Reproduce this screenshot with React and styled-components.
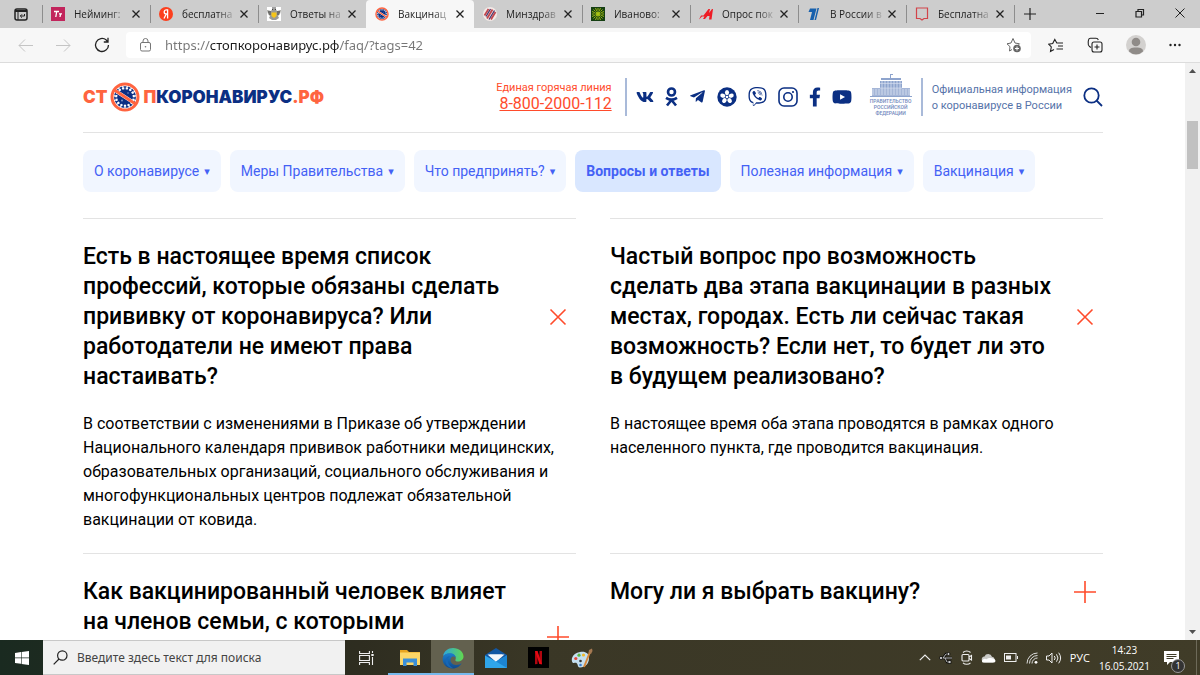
import React, { useState } from "react";
import styled, { createGlobalStyle, css } from "styled-components";
import {
  FaVk,
  FaTelegramPlane,
  FaViber,
  FaFacebookF,
  FaYoutube,
} from "react-icons/fa";

const TABS = [
  { id: "tilda", title: "Нейминг:" },
  { id: "yandex", title: "бесплатна" },
  { id: "gerb", title: "Ответы на" },
  { id: "virus", title: "Вакцинац", active: true },
  { id: "minzdrav", title: "Минздрав" },
  { id: "ivanovo", title: "Иваново:" },
  { id: "aif", title: "Опрос пок" },
  { id: "first", title: "В России в" },
  { id: "book", title: "Бесплатна" },
];

const NAV = [
  { title: "О коронавирусе", menu: true },
  { title: "Меры Правительства", menu: true },
  { title: "Что предпринять?", menu: true },
  { title: "Вопросы и ответы", active: true },
  { title: "Полезная информация", menu: true },
  { title: "Вакцинация", menu: true },
];

const FAQ = [
  {
    id: 1,
    question:
      "Есть в настоящее время список\nпрофессий, которые обязаны сделать\nпрививку от коронавируса? Или\nработодатели не имеют права\nнастаивать?",
    answer:
      "В соответствии с изменениями в Приказе об утверждении\nНационального календаря прививок работники медицинских,\nобразовательных организаций, социального обслуживания и\nмногофункциональных центров подлежат обязательной\nвакцинации от ковида.",
  },
  {
    id: 2,
    question:
      "Частый вопрос про возможность\nсделать два этапа вакцинации в разных\nместах, городах. Есть ли сейчас такая\nвозможность? Если нет, то будет ли это\nв будущем реализовано?",
    answer:
      "В настоящее время оба этапа проводятся в рамках одного\nнаселенного пункта, где проводится вакцинация.",
  },
  {
    id: 3,
    question: "Как вакцинированный человек влияет\nна членов семьи, с которыми",
    lines: 4,
  },
  { id: 4, question: "Могу ли я выбрать вакцину?" },
];

const VirusMark = ({ size }) => (
  <svg width={size} height={size} viewBox="0 0 30 30" aria-hidden="true">
    <g stroke="#0b2f83" strokeWidth="1.3" strokeLinecap="round">
      {[0, 24, 48, 72, 96, 120, 144, 168, 192, 216, 240, 264, 288, 312, 336].map(
        (a) => (
          <path key={a} d="M15 10V4.8M14 4.8h2" transform={`rotate(${a} 15 15)`} />
        )
      )}
    </g>
    <circle cx="15" cy="15" r="7.8" fill="#0b2f83" />
    <circle cx="12" cy="18.5" r="1" fill="#7f96c8" />
    <circle cx="18" cy="11" r="0.8" fill="#7f96c8" />
    <path d="M6.5 9.500l17 11" stroke="#fff" strokeWidth="3.600" />
    <circle cx="15" cy="15" r="13" fill="none" stroke="#ff6440" strokeWidth="3" />
    <path d="M4.5 8l21 14" stroke="#ff6440" strokeWidth="3" />
  </svg>
);

const Favicon = ({ id }) => {
  if (id === "virus") return <VirusMark size={14} />;
  return (
    <svg width="14" height="14" viewBox="0 0 14 14" aria-hidden="true">
      {id === "tilda" && (
        <>
          <rect width="14" height="14" fill="#c2255c" />
          <path d="M3 4.5h5M5.7 4.5L4.8 10M8 6.8h3M9.6 6.8L9 10" stroke="#fff" strokeWidth="1.3" />
        </>
      )}
      {id === "yandex" && (
        <>
          <circle cx="7" cy="7" r="7" fill="#fc3f1d" />
          <path d="M8.6 11.5V2.9H7.4C6 2.9 5.2 3.7 5.2 5s.7 2 2 2h1.4M7.2 7L5 11.5" fill="none" stroke="#fff" strokeWidth="1.3" />
        </>
      )}
      {id === "gerb" && (
        <>
          <rect width="14" height="14" fill="#fff" />
          <path d="M0 3l4 1 1.500-2h3L10 4l4-1-1 4-2 2 1 2-3 2H5l-3-2 1-2-2-2z" fill="#9a9a95" />
          <path d="M1 5h3M10 5h3M5 1h4M5 2.500h1M8 2.500h1M2 7h2M10 7h2" stroke="#444" />
          <path d="M4.500 5.500h5V9L7 11 4.500 9z" fill="#f5c518" />
        </>
      )}
      {id === "minzdrav" && (
        <>
          <circle cx="7" cy="7" r="7" fill="#f3e9e6" />
          <path d="M1.500 8.500L5.500 2M4 11.500L9.500 2.500M8 12.500l4.500-7.500" stroke="#c2474e" strokeWidth="1.800" />
          <path d="M3 9.500L7.500 2M6 12.500L11.500 3.500" stroke="#49386f" strokeWidth="1.300" />
        </>
      )}
      {id === "ivanovo" && (
        <>
          <rect width="14" height="14" fill="#153f12" />
          <path d="M7 1v12M1 7h12M2.500 2.500l9 9M11.500 2.500l-9 9M4.500 1l5 12M9.500 1l-5 12M1 4.500l12 5M1 9.500l12-5" stroke="#a9c414" strokeWidth="0.900" />
          <circle cx="7" cy="7" r="3.200" fill="none" stroke="#153f12" strokeWidth="0.700" />
        </>
      )}
      {id === "aif" && (
        <path d="M0 12.500l2-4h2.500L9.500 2h1.500L10 6l3-4h1l-1.500 10.500H10l.5-3.500H8.500L6 12H4l1.500-2.500H3z" fill="#ee1c25" />
      )}
      {id === "first" && (
        <path d="M3 1.500h6.500L6.500 13H3L5 5H1.500zM10.500 1H12L9 13H7.500z" fill="#1660ad" />
      )}
      {id === "book" && (
        <path d="M1.500 1h11v10.500H9L7 13l-2-1.500H1.500z" fill="none" stroke="#d2444a" strokeWidth="1.200" />
      )}
    </svg>
  );
};

const CloseIcon = () => (
  <svg width="8" height="8" viewBox="0 0 8 8" aria-hidden="true">
    <path d="M0.500 0.500l7 7M7.500 0.500l-7 7" stroke="#222" strokeWidth="1.300" />
  </svg>
);

const BrowserTabs = () => (
  <TabStrip>
    <TabActions aria-label="Меню вкладок">
      <svg width="14" height="13" viewBox="0 0 14 13" fill="none" stroke="#222">
        <rect x="1" y="1" width="12" height="11" rx="2" strokeWidth="1.500" />
        <path d="M1 3h12" strokeWidth="2" />
        <path d="M4 4v8" />
        <path d="M10.500 6v2H6.500M8 6.300L6.300 8 8 9.700" />
      </svg>
    </TabActions>
    {TABS.map((tab) => (
      <Tab key={tab.id} $active={tab.active}>
        <Favicon id={tab.id} />
        <TabTitle>{tab.title}</TabTitle>
        <TabClose aria-label="Закрыть вкладку">
          <CloseIcon />
        </TabClose>
      </Tab>
    ))}
    <NewTab aria-label="Новая вкладка">
      <svg width="12" height="12" viewBox="0 0 12 12" stroke="#222" strokeWidth="1.200">
        <path d="M6 0v12M0 6h12" />
      </svg>
    </NewTab>
    <WindowButtons>
      <WindowButton aria-label="Свернуть">
        <svg width="10" height="10" viewBox="0 0 10 10" stroke="#222">
          <path d="M1 5.500h8" />
        </svg>
      </WindowButton>
      <WindowButton aria-label="Развернуть">
        <svg width="10" height="10" viewBox="0 0 10 10" stroke="#222" fill="none">
          <path d="M1 3.500h5.500v5.500H1zM3 3V1.500h5.500V7H7" strokeWidth="1.200" />
        </svg>
      </WindowButton>
      <WindowButton aria-label="Закрыть">
        <svg width="10" height="10" viewBox="0 0 10 10" stroke="#222">
          <path d="M0.500 0.500l9 9M9.500 0.500l-9 9" />
        </svg>
      </WindowButton>
    </WindowButtons>
  </TabStrip>
);

const BrowserToolbar = () => {
  const [url, setUrl] = useState("https://стопкоронавирус.рф/faq/?tags=42");

  return (
    <Toolbar>
      <NavButtons>
        <ToolButton aria-label="Назад" disabled>
          <svg width="15" height="13" viewBox="0 0 15 13" fill="none" stroke="#c4c4c4">
            <path d="M7 .5L1 6.500l6 6M1 6.500h14" />
          </svg>
        </ToolButton>
        <ToolButton aria-label="Вперёд" disabled>
          <svg width="15" height="13" viewBox="0 0 15 13" fill="none" stroke="#c4c4c4">
            <path d="M8 .5l6 6-6 6M14 6.500H0" />
          </svg>
        </ToolButton>
        <ToolButton aria-label="Обновить">
          <svg width="16" height="16" viewBox="0 0 16 16" fill="none" stroke="#222" strokeWidth="1.300">
            <path d="M14.500 8A6.500 6.500 0 1 1 12.300 3.100L14 5M14 .8V5H9.800" />
          </svg>
        </ToolButton>
      </NavButtons>
      <AddressBar>
        <svg width="11" height="14" viewBox="0 0 11 14" fill="none" stroke="#767676">
          <rect x="0.500" y="4.500" width="10" height="8.500" rx="1.500" />
          <path d="M3 4.500V3a2.500 2.500 0 0 1 5 0v1.500" />
          <circle cx="5.500" cy="8.800" r="0.800" fill="#767676" stroke="none" />
        </svg>
        <AddressInput
          aria-label="Адресная строка"
          value={url}
          spellCheck={false}
          onChange={(e) => setUrl(e.target.value)}
        />
        <ToolButton aria-label="Добавить в избранное">
          <svg width="17" height="16" viewBox="0 0 17 16" fill="none" stroke="#666">
            <path d="M6 12.500l-2.500 1.500.5-4.300L1 6.800l4-.8L7 1.500 9 6l4.500.8-1 1" />
            <circle cx="11" cy="11.500" r="3.800" fill="#666" stroke="none" />
            <path d="M11 9.500v4M9 11.500h4" stroke="#fff" />
          </svg>
        </ToolButton>
      </AddressBar>
      <ToolActions>
        <ToolButton aria-label="Избранное">
          <svg width="16" height="15" viewBox="0 0 16 15" fill="none" stroke="#222" strokeWidth="1.100">
            <path d="M6 11.500l-3.500 2L3.300 9 .7 6.200l4-.6L6.800 1.500l2 3.500H15M10 8h5M8.500 11H15" />
          </svg>
        </ToolButton>
        <ToolButton aria-label="Коллекции">
          <svg width="16" height="16" viewBox="0 0 16 16" fill="none" stroke="#222" strokeWidth="1.100">
            <rect x="5" y="5" width="10" height="10" rx="2" />
            <path d="M10 7.500v5M7.500 10h5M4 10.500L2.500 9.500C1 8.500 1 7 1.200 5L1.500 3c.2-1 1-1.700 2-1.700h5.500c1 0 2 .7 2.300 1.700" />
          </svg>
        </ToolButton>
        <ToolButton aria-label="Профиль">
          <svg width="20" height="20" viewBox="0 0 20 20">
            <circle cx="10" cy="10" r="10" fill="#d3d1cf" />
            <circle cx="10" cy="7" r="4.300" fill="#8f8b88" />
            <path d="M3 16.500c0-3 2-4 7-4s7 1 7 4a10 10 0 0 1-14 0z" fill="#8f8b88" />
          </svg>
        </ToolButton>
        <ToolButton aria-label="Настройки">
          <svg width="12" height="4" viewBox="0 0 12 4" fill="#222">
            <circle cx="1.500" cy="2" r="1.200" />
            <circle cx="6" cy="2" r="1.200" />
            <circle cx="10.500" cy="2" r="1.200" />
          </svg>
        </ToolButton>
      </ToolActions>
    </Toolbar>
  );
};

const SiteHeader = () => (
  <Header>
    <Logo href="#" aria-label="Стопкоронавирус.рф">
      <LogoAccent>СТ</LogoAccent>
      <VirusMark size={30} />
      <span>
        <LogoAccent>П</LogoAccent>КОРОНАВИРУС<LogoAccent>.РФ</LogoAccent>
      </span>
    </Logo>
    <Hotline>
      <span>Единая горячая линия</span>
      <Phone href="tel:88002000112">8-800-2000-112</Phone>
    </Hotline>
    <Socials>
      <a href="#vk" aria-label="ВКонтакте"><FaVk size={18} /></a>
      <a href="#ok" aria-label="Одноклассники">
        <svg width="13" height="20" viewBox="0 0 13 20" fill="none" stroke="currentColor" strokeWidth="2.600">
          <circle cx="6.500" cy="5" r="3.500" />
          <path d="M1 10.800c3.500 2.300 7.500 2.300 11 0M6.500 13L2 18.500M6.500 13l4.500 5.500" />
        </svg>
      </a>
      <a href="#tg" aria-label="Telegram"><FaTelegramPlane size={17} /></a>
      <a href="#icq" aria-label="ICQ">
        <svg width="20" height="20" viewBox="0 0 20 20">
          <circle cx="10" cy="10" r="9.700" fill="currentColor" />
          {[0, 72, 144, 216, 288].map((a) => (
            <ellipse key={a} cx="10" cy="5.600" rx="2.100" ry="2.600" fill="#fff" transform={`rotate(${a} 10 10)`} />
          ))}
          <circle cx="10" cy="10" r="1.300" fill="#fff" />
        </svg>
      </a>
      <a href="#viber" aria-label="Viber"><FaViber size={19} /></a>
      <a href="#ig" aria-label="Instagram">
        <svg width="20" height="20" viewBox="0 0 20 20" fill="none" stroke="currentColor" strokeWidth="1.600">
          <rect x="1" y="1" width="18" height="18" rx="5" />
          <circle cx="10" cy="10" r="4.200" />
          <circle cx="15" cy="5" r="1.100" fill="currentColor" stroke="none" />
        </svg>
      </a>
      <a href="#fb" aria-label="Facebook"><FacebookIcon /></a>
      <a href="#yt" aria-label="YouTube"><FaYoutube size={20} /></a>
    </Socials>
    <Government>
      <svg width="44" height="24" viewBox="0 0 44 24" fill="#8ea4cd">
        <path d="M21 0h3v1h-2v4h-1zM12 4h20v2H12zM11 7h22v7H11z" />
        <path d="M3 14h38v8H3z" opacity="0.800" />
        <path d="M1 22h42v1H1z" />
        <path d="M4 15v6M7 15v6M10 15v6M13 7v14M16 7v14M19 7v14M22 7v14M25 7v14M28 7v14M31 7v14M34 15v6M37 15v6M40 15v6" stroke="#dbe3f2" strokeWidth="0.800" />
        <path d="M11 9.500h22M11 14h22" stroke="#dbe3f2" strokeWidth="0.600" />
      </svg>
      <span>ПРАВИТЕЛЬСТВО</span>
      <span>РОССИЙСКОЙ</span>
      <span>ФЕДЕРАЦИИ</span>
    </Government>
    <Official>
      Официальная информация
      <br />о коронавирусе в России
    </Official>
    <SearchButton aria-label="Поиск">
      <svg width="20" height="20" viewBox="0 0 20 20" fill="none" stroke="#0b2f83" strokeWidth="1.800">
        <circle cx="8.500" cy="8.500" r="7.200" />
        <path d="M13.500 13.500l5.500 5.500" />
      </svg>
    </SearchButton>
  </Header>
);

const FaqItem = ({ item }) => {
  const [open, setOpen] = useState(!!item.answer);

  return (
    <Item>
      <QuestionRow>
        <Question $lines={item.lines}>{item.question}</Question>
        <Toggle
          aria-label={open ? "Свернуть ответ" : "Показать ответ"}
          aria-expanded={open}
          onClick={() => setOpen(!open)}
        >
          <svg width="22" height="22" viewBox="0 0 22 22" fill="none" stroke="#ff4b2b" strokeWidth="1.600">
            {open ? (
              <path d="M3.500 3.500l15 15M18.500 3.500l-15 15" />
            ) : (
              <path d="M11 0v22M0 11h22" />
            )}
          </svg>
        </Toggle>
      </QuestionRow>
      {open && item.answer && <Answer>{item.answer}</Answer>}
    </Item>
  );
};

const TaskbarPanel = () => (
  <Taskbar>
    <TaskButton aria-label="Пуск">
      <svg width="14" height="14" viewBox="0 0 14 14" fill="#fff">
        <path d="M0 2l6-.9v5.500H0zM6.600 1L14 0v6.600H6.600zM0 7.200h6v5.500l-6-.8zM6.600 7.200H14V14l-7.400-1.100z" />
      </svg>
    </TaskButton>
    <TaskSearch>
      <svg width="15" height="15" viewBox="0 0 15 15" fill="none" stroke="#222" strokeWidth="1.200">
        <circle cx="9.300" cy="5.500" r="4.700" />
        <path d="M6 9L.7 14.300" />
      </svg>
      <input aria-label="Поиск Windows" placeholder="Введите здесь текст для поиска" />
    </TaskSearch>
    <TaskButton aria-label="Представление задач">
      <svg width="15" height="14" viewBox="0 0 15 14" fill="none" stroke="#eee" strokeWidth="1.100">
        <path d="M.6 0v2.500h9.800V0M.6 14v-2.500h9.800V14M.6 4.500h9.800v5H.6zM13.500 0v2M13.500 6v8" />
        <path d="M12.300 4h2.400" strokeWidth="2" />
      </svg>
    </TaskButton>
    <TaskButton aria-label="Проводник" $running>
      <svg width="20" height="18" viewBox="0 0 20 18">
        <path d="M0 1h7l2 2h11v13H0z" fill="#e8a520" />
        <path d="M0 3.500h20V16H0z" fill="#fcd667" />
        <path d="M3 9.500h14V17h-3.500v-3.500h-7V17H3z" fill="#3b8fd8" />
      </svg>
    </TaskButton>
    <TaskButton aria-label="Microsoft Edge" $running $current>
      <svg width="22" height="22" viewBox="0 0 22 22">
        <defs>
          <linearGradient id="edgeTop" x1="0" x2="1">
            <stop offset="0" stopColor="#2aa5e0" />
            <stop offset="1" stopColor="#62d84e" />
          </linearGradient>
          <linearGradient id="edgeLow" x1="0" y1="0" x2="0" y2="1">
            <stop offset="0" stopColor="#1a7fd0" />
            <stop offset="1" stopColor="#114a8b" />
          </linearGradient>
        </defs>
        <path d="M1 9C2 4 6 1 11 1c6 0 10.500 4 10.500 8.500 0 3.500-3 5-5.500 5-2 0-3-.8-2.600-1.600C15 10 12 6.500 8 6.500 4.500 6.500 2 8 1 9z" fill="url(#edgeTop)" />
        <path d="M.6 11.500C1 8 4.500 6.300 8 6.300c3.300 0 5.600 2 5.700 4.500-1-1.300-2.700-1.500-3.700-.8C7 12 8.500 18 14 18c2.500 0 4.500-1 5.800-2-1.500 3-5 5.500-9 5.500C5 21.500.3 17.500.6 11.500z" fill="url(#edgeLow)" />
        <path d="M8 9c-4 3-2 10.500 4 12.300C7 21.500 3.500 18 3.500 14 3.500 11 5.500 9.300 8 9z" fill="#1667b7" />
      </svg>
    </TaskButton>
    <TaskButton aria-label="Почта">
      <svg width="22" height="20" viewBox="0 0 22 20">
        <path d="M0 7l11-7 11 7v12H0z" fill="#1257a3" />
        <path d="M2.500 6.500h17L11 14z" fill="#f5f7fb" />
        <path d="M0 7.500l11 6 11-6V20H0z" fill="#2fa5ea" />
        <path d="M4.500 6.500h13L11 13.500z" fill="#f5f7fb" />
        <path d="M22 7.500V20L11 13.500z" fill="#1c84d2" />
      </svg>
    </TaskButton>
    <TaskButton aria-label="Netflix">
      <svg width="21" height="21" viewBox="0 0 21 21">
        <rect width="21" height="21" fill="#000" />
        <path d="M7 4h2.500v13L7 17.300zM11.500 4H14v13.300l-2.500-.3z" fill="#b1060f" />
        <path d="M7 4h2.500L14 17.300l-2.600-.3z" fill="#e50914" />
      </svg>
    </TaskButton>
    <TaskButton aria-label="Paint">
      <svg width="22" height="20" viewBox="0 0 22 20">
        <path d="M9 4c5-1 9 1 9 6 0 6-4 9.500-9 9.500-2 0-2-1.500-2.500-3S5 14.500 3 15 .5 12 1 10c1-3.500 4-5.300 8-6z" fill="#c5dff0" />
        <circle cx="4.800" cy="10.500" r="1.600" fill="#e0483a" />
        <circle cx="8" cy="7.200" r="1.600" fill="#57b947" />
        <circle cx="12.500" cy="7" r="1.600" fill="#f1b92c" />
        <circle cx="9.500" cy="13" r="1.300" fill="#333" />
        <circle cx="9.500" cy="17" r="1.300" fill="#3c7fd0" />
        <path d="M19 4L13 19" stroke="#d88739" strokeWidth="2" />
        <path d="M17.500 5l.5-3L21 .5 21.500 3 20 6z" fill="#a57952" />
      </svg>
    </TaskButton>
    <Tray>
      <svg width="12" height="7" viewBox="0 0 12 7" fill="none" stroke="#eee" strokeWidth="1.200">
        <path d="M.8 6.200L6 1l5.200 5.200" />
      </svg>
      <svg width="14" height="14" viewBox="0 0 14 14" fill="none" stroke="#0c0c0a" strokeWidth="2.400">
        <path d="M1 7h12M4 7l3-4h2M6 7l2 4h2" />
        <path d="M1 7h12M4 7l3-4h2M6 7l2 4h2" stroke="#ccc" strokeWidth="0.900" />
        <circle cx="2" cy="7" r="1.600" fill="#ccc" strokeWidth="0.800" />
        <circle cx="9.500" cy="3" r="1.500" fill="#ccc" strokeWidth="0.800" />
        <path d="M9 9.500h3v3H9z" fill="#ccc" strokeWidth="0.800" />
      </svg>
      <svg width="12" height="15" viewBox="0 0 12 15" fill="none" stroke="#eee" strokeWidth="1.100">
        <rect x="1" y="4.500" width="7" height="6.500" rx="1" />
        <path d="M8 7l2.500-1.500V10L8 8.500M2 2.500c2-2 5.500-2 7.500 0M2 12.800c2 2 5.500 2 7.500 0" />
      </svg>
      <svg width="15" height="10" viewBox="0 0 15 10">
        <path d="M4 9.500a3 3 0 0 1-.5-6A4 4 0 0 1 11 3.800a3 3 0 0 1 1 5.700z" fill="#c9c9c6" />
        <path d="M1 8.500C1 6 4 5 5.500 6.200c2-2.200 8.500-1.500 9 1.500 0 1-.8 1.800-2 1.800h-10C1.500 9.500 1 9 1 8.500z" fill="#fff" />
      </svg>
      <svg width="14" height="9" viewBox="0 0 14 9" fill="none" stroke="#eee">
        <rect x="0.500" y="0.500" width="11.500" height="8" />
        <path d="M13.500 3v3" />
        <path d="M2 2.500h5v4H2z" fill="#eee" stroke="none" />
      </svg>
      <svg width="12" height="12" viewBox="0 0 12 12" fill="none" stroke="#ddd">
        <path d="M1 11.500A10.500 10.500 0 0 1 11.500 1M3.500 11.500a8 8 0 0 1 8-8M6 11.500A5.500 5.500 0 0 1 11.500 6" />
        <circle cx="10" cy="10.300" r="1.400" fill="#fff" stroke="none" />
      </svg>
      <svg width="16" height="12" viewBox="0 0 16 12" fill="none" stroke="#eee">
        <path d="M.5 4h2.500l3-3v10L3 8H.5zM8.300 4a3 3 0 0 1 0 4M10.500 2.300a6 6 0 0 1 0 7.400M12.700.7a9 9 0 0 1 0 10.600" />
      </svg>
      <Language>РУС</Language>
      <Clock>
        <span>14:23</span>
        <span>16.05.2021</span>
      </Clock>
      <Notifications aria-label="Уведомления">
        <svg width="15" height="14" viewBox="0 0 15 14">
          <path d="M0 0h15v11H6l-3 3v-3H0z" fill="#fff" />
          <path d="M2.500 3.500h10M2.500 5.500h10M2.500 7.500h7" stroke="#403c28" />
        </svg>
        <Badge>1</Badge>
      </Notifications>
    </Tray>
  </Taskbar>
);

const App = () => (
  <Screen>
    <GlobalStyle />
    <BrowserTabs />
    <BrowserToolbar />
    <Viewport>
      <Page>
        <SiteHeader />
        <Nav>
          {NAV.map((item) => (
            <NavLink key={item.title} href="#" $active={item.active}>
              {item.title}
              {item.menu && <Caret>▾</Caret>}
            </NavLink>
          ))}
        </Nav>
        <FaqGrid>
          {FAQ.map((item) => (
            <FaqItem key={item.id} item={item} />
          ))}
        </FaqGrid>
      </Page>
      <Scrollbar>
        <svg width="7" height="4" viewBox="0 0 7 4">
          <path d="M3.500 0L7 4H0z" fill="#505050" />
        </svg>
        <Thumb />
        <svg width="7" height="4" viewBox="0 0 7 4">
          <path d="M0 0h7L3.500 4z" fill="#505050" />
        </svg>
      </Scrollbar>
    </Viewport>
    <TaskbarPanel />
  </Screen>
);

export default App;

const GlobalStyle = createGlobalStyle`
  * {
    box-sizing: border-box;
  }

  body {
    margin: 0;
    background: #fff;
  }

  button {
    padding: 0;
    border: 0;
    background: none;
    font: inherit;
    color: inherit;
  }

  svg {
    display: block;
    flex-shrink: 0;
  }
`;

const Screen = styled.div`
  display: flex;
  flex-direction: column;
  height: 100vh;
  overflow: hidden;
  font-family: "Open Sans", "Noto Sans", sans-serif;
`;

const TabStrip = styled.div`
  display: flex;
  align-items: stretch;
  flex-shrink: 0;
  height: 28px;
  background: #cdcdcd;
`;

const TabActions = styled.button`
  display: flex;
  align-items: center;
  justify-content: center;
  width: 42px;
`;

const Tab = styled.div`
  display: flex;
  align-items: center;
  width: 108px;
  padding: 0 10px 0 9px;
  background: linear-gradient(#8d8d8d, #8d8d8d) left center / 1px 18px no-repeat;

  ${({ $active }) =>
    $active &&
    css`
      background: #f7f7f7;
      border-radius: 4px 4px 0 0;

      & + div {
        background: none;
      }
    `}
`;

const TabTitle = styled.span`
  flex: 1;
  min-width: 0;
  margin-left: 9px;
  white-space: nowrap;
  font-size: 10px;
  line-height: 16px;
  color: #222;
  mask-image: linear-gradient(to right, #000 65%, rgba(0, 0, 0, 0.2) 95%);
`;

const TabClose = styled.button`
  display: flex;
  margin-left: 4px;
`;

const NewTab = styled.button`
  display: flex;
  align-items: center;
  padding: 0 10px;
  background: linear-gradient(#8d8d8d, #8d8d8d) left center / 1px 18px no-repeat;
`;

const WindowButtons = styled.div`
  display: flex;
  margin-left: auto;
`;

const WindowButton = styled.button`
  display: flex;
  align-items: center;
  justify-content: center;
  width: 40px;
  padding-bottom: 2px;
`;

const Toolbar = styled.div`
  display: flex;
  align-items: center;
  flex-shrink: 0;
  height: 35px;
  background: #f7f7f7;
  border-bottom: 1px solid #dcdcdc;
`;

const NavButtons = styled.div`
  display: flex;
  gap: 23px;
  padding: 0 16px 0 18px;
`;

const ToolButton = styled.button`
  display: flex;
  align-items: center;
  justify-content: center;
`;

const AddressBar = styled.div`
  display: flex;
  align-items: center;
  flex: 1;
  height: 26px;
  padding: 0 8px 0 14px;
  background: #fff;
  border-radius: 4px;
`;

const AddressInput = styled.input`
  flex: 1;
  margin-left: 14px;
  padding: 0;
  border: 0;
  outline: 0;
  font-family: "Noto Sans", sans-serif;
  font-size: 13px;
  line-height: 20px;
  color: transparent;
  caret-color: #222;
  background: linear-gradient(to right, #767676 45px, #1b1b1b 45px, #1b1b1b 175px, #767676 175px);
  background-clip: text;
`;

const ToolActions = styled.div`
  display: flex;
  align-items: center;
  gap: 23px;
  padding: 0 19px 0 17px;
`;

const Viewport = styled.div`
  display: flex;
  flex: 1;
  min-height: 0;
`;

const Page = styled.main`
  flex: 1;
  min-width: 0;
  overflow: hidden;
  padding: 0 82px 0 83px;
  font-family: Roboto, sans-serif;
  color: #000;
`;

const Header = styled.header`
  display: flex;
  align-items: center;
  height: 70px;
  padding-bottom: 2px;
  border-bottom: 1px solid #e3e3e3;
`;

const Logo = styled.a`
  display: flex;
  align-items: center;
  gap: 3px;
  margin-right: auto;
  font-family: Inter, sans-serif;
  font-size: 17px;
  font-weight: 900;
  line-height: 20px;
  color: #0b2f83;
  text-decoration: none;
  white-space: nowrap;
`;

const LogoAccent = styled.span`
  color: #ff6440;
`;

const Hotline = styled.div`
  display: flex;
  flex-direction: column;
  align-items: flex-end;
  height: 38px;
  padding: 2px 13px 0 0;
  border-right: 2px solid #a9bad9;
  font-size: 11px;
  line-height: 16px;
  color: #ff4b2b;
  white-space: nowrap;
`;

const Phone = styled.a`
  font-size: 16px;
  line-height: 16px;
  color: inherit;
`;

const Socials = styled.div`
  display: flex;
  align-items: center;
  gap: 11px;
  margin: 0 17px 0 9px;

  a {
    color: #0b2f83;
  }
`;

const FacebookIcon = styled(FaFacebookF)`
  width: 12px;
  height: 20px;
`;

const Government = styled.div`
  display: flex;
  flex-direction: column;
  align-items: center;
  margin-right: 8px;
  padding-bottom: 4px;
  font-size: 5px;
  font-weight: 500;
  line-height: 6px;
  color: #7189bd;
`;

const Official = styled.div`
  padding: 4px 0 2px 9px;
  border-left: 2px solid #a9bad9;
  font-size: 11px;
  line-height: 16px;
  color: #5673a9;
  white-space: nowrap;
`;

const SearchButton = styled.button`
  margin-left: 11px;
`;

const Nav = styled.nav`
  display: flex;
  gap: 9px;
  padding: 17px 0 26px;
`;

const NavLink = styled.a`
  display: flex;
  align-items: center;
  height: 42px;
  padding: 0 11px;
  border-radius: 8px;
  background: ${({ $active }) => ($active ? "#d9e7ff" : "#f1f6ff")};
  font-size: 14px;
  font-weight: ${({ $active }) => ($active ? 700 : 400)};
  line-height: 20px;
  color: #4461f5;
  text-decoration: none;
  white-space: nowrap;
`;

const Caret = styled.span`
  margin-left: 5px;
  padding-top: 2px;
  font-family: "DejaVu Sans", sans-serif;
  font-size: 11px;
`;

const FaqGrid = styled.div`
  display: grid;
  grid-template-columns: 1fr 1fr;
  column-gap: 34px;
`;

const Item = styled.section`
  padding: 23px 0 21px;
  border-top: 1px solid #e3e3e3;
`;

const QuestionRow = styled.div`
  display: flex;
  align-items: center;
  justify-content: space-between;
`;

const Question = styled.h2`
  margin: 0;
  min-height: ${({ $lines = 1 }) => $lines * 30}px;
  font-size: 23px;
  font-weight: 500;
  line-height: 30px;
  white-space: pre-line;
`;

const Toggle = styled.button`
  padding: 0 7px;
`;

const Answer = styled.p`
  margin: 20px 0 0;
  font-size: 16px;
  line-height: 24px;
  white-space: pre-line;
`;

const Scrollbar = styled.div`
  display: flex;
  flex-direction: column;
  align-items: center;
  width: 15px;
  padding: 6px 0;
  background: #f1f1f1;
`;

const Thumb = styled.div`
  width: 11px;
  height: 48px;
  margin: 48px 0 auto;
  background: #c1c1c1;
`;

const Taskbar = styled.div`
  display: flex;
  flex-shrink: 0;
  height: 35px;
  background: linear-gradient(to right, #1a2a20, #2e2d20 30%, #3a3726 45%, #403c28);
  color: #fff;
`;

const TaskButton = styled.button`
  display: flex;
  align-items: center;
  justify-content: center;
  width: 43px;
  background: ${({ $current }) => ($current ? "#63614f" : "none")};
  box-shadow: ${({ $running }) => ($running ? "inset 0 -2px #76b9ed" : "none")};
`;

const TaskSearch = styled.label`
  display: flex;
  align-items: center;
  width: 302px;
  padding: 0 10px;
  background: #f1f1f1;
  border: 1px solid #c8c8c8;
  border-width: 1px 0;

  input {
    flex: 1;
    min-width: 0;
    margin-left: 9px;
    padding: 0;
    border: 0;
    outline: 0;
    background: none;
    font-family: "Noto Sans", sans-serif;
    font-size: 12px;
    line-height: 16px;
  }

  input::placeholder {
    color: #444;
  }
`;

const Tray = styled.div`
  display: flex;
  align-items: center;
  gap: 8px;
  margin-left: auto;
  margin-right: 3px;
  padding-right: 11px;
  border-right: 1px solid #6d6a59;
`;

const Language = styled.span`
  font-size: 11px;
`;

const Clock = styled.div`
  display: flex;
  flex-direction: column;
  align-items: center;
  margin: 0 6px 0 1px;
  font-size: 10px;
  line-height: 16px;
`;

const Notifications = styled.button`
  position: relative;
  width: 21px;
`;

const Badge = styled.span`
  position: absolute;
  right: 0;
  bottom: -8px;
  width: 14px;
  height: 14px;
  border: 1px solid #999;
  border-radius: 50%;
  background: #333;
  font-size: 9px;
  line-height: 12px;
  text-align: center;
`;
